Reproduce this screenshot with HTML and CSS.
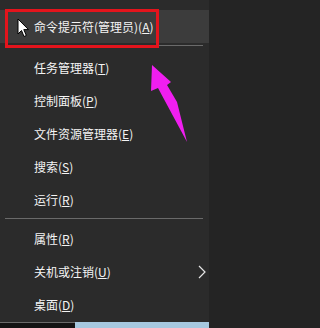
FILE: index.html
```html
<!DOCTYPE html>
<html lang="zh-CN">
<head>
<meta charset="utf-8">
<link rel="stylesheet" href="styles.css">
</head>
<body>
<div class="screen">
  <div class="menu">
    <div class="top-gap"></div>
    <div class="item active">命令提示符(管理员)(<u>A</u>)</div>
    <div class="sep first"></div>
    <div class="item">任务管理器(<u>T</u>)</div>
    <div class="item">控制面板(<u>P</u>)</div>
    <div class="item">文件资源管理器(<u>E</u>)</div>
    <div class="item">搜索(<u>S</u>)</div>
    <div class="item">运行(<u>R</u>)</div>
    <div class="sep second"></div>
    <div class="item">属性(<u>R</u>)</div>
    <div class="item has-sub">关机或注销(<u>U</u>)
      <svg class="chev" width="8" height="14" viewBox="0 0 8 14"><path d="M1 1 L7 7 L1 13" fill="none" stroke="#e6e6e6" stroke-width="1.2"/></svg>
    </div>
    <div class="item">桌面(<u>D</u>)</div>
    <div class="bottom-gap"></div>
  </div>
  <div class="taskbar">
    <div class="tb-dark"></div>
    <div class="tb-blue"></div>
  </div>

  <div class="highlight-box"></div>
  <svg class="cursor" width="13" height="20" viewBox="0 0 13 20">
    <path d="M1 1 L1 16 L4.5 12.5 L7 18.5 L9.3 17.5 L6.8 11.6 L11.5 11.6 Z" fill="#fff" stroke="#000" stroke-width="1" stroke-linejoin="miter"/>
  </svg>
  <svg class="pink-arrow" width="217" height="328" viewBox="0 0 217 328">
    <polygon points="152,65 171,82 167,85 177,102 187,142 158,88 151,91" fill="#f01ef0"/>
  </svg>
</div>
</body>
</html>
```

FILE: styles.css
```css
html, body {
  margin: 0;
  padding: 0;
}
body {
  width: 217px;
  height: 328px;
  overflow: hidden;
  background: #242424;
  font-family: "Noto Sans CJK SC", "Microsoft YaHei", "Noto Sans", sans-serif;
}
.screen {
  position: relative;
  width: 209px;
  height: 328px;
}
.menu {
  background: #2b2b2b;
  display: flex;
  flex-direction: column;
}
.top-gap {
  height: 10px;
}
.item {
  position: relative;
  height: 33px;
  display: flex;
  align-items: center;
  padding-left: 34px;
  font-size: 12px;
  color: #f4f4f4;
  white-space: nowrap;
  letter-spacing: 0;
}
.item u {
  text-decoration-thickness: 1px;
  text-underline-offset: 1px;
}
.item.active {
  background: #3c3c3c;
}
.sep {
  position: relative;
}
.sep::after {
  content: "";
  position: absolute;
  left: 5px;
  right: 6px;
  top: 2px;
  height: 1px;
  background: #6a6a6a;
}
.sep.first {
  height: 8px;
}
.sep.second {
  height: 6px;
}
.has-sub .chev {
  position: absolute;
  left: 198px;
  top: 10px;
}
.bottom-gap {
  height: 1px;
}
.taskbar {
  display: flex;
  height: 6px;
}
.tb-dark {
  width: 75px;
  background: #141414;
  border-top: 1px solid #6b6b6b;
  box-sizing: border-box;
}
.tb-blue {
  flex: 1;
  background: #a6c8df;
}
.highlight-box {
  position: absolute;
  left: 5px;
  top: 9px;
  width: 154px;
  height: 39px;
  border: 3px solid #e3141c;
  box-sizing: border-box;
}
.cursor {
  position: absolute;
  left: 17px;
  top: 18px;
}
.pink-arrow {
  position: absolute;
  left: 0;
  top: 0;
}
```
